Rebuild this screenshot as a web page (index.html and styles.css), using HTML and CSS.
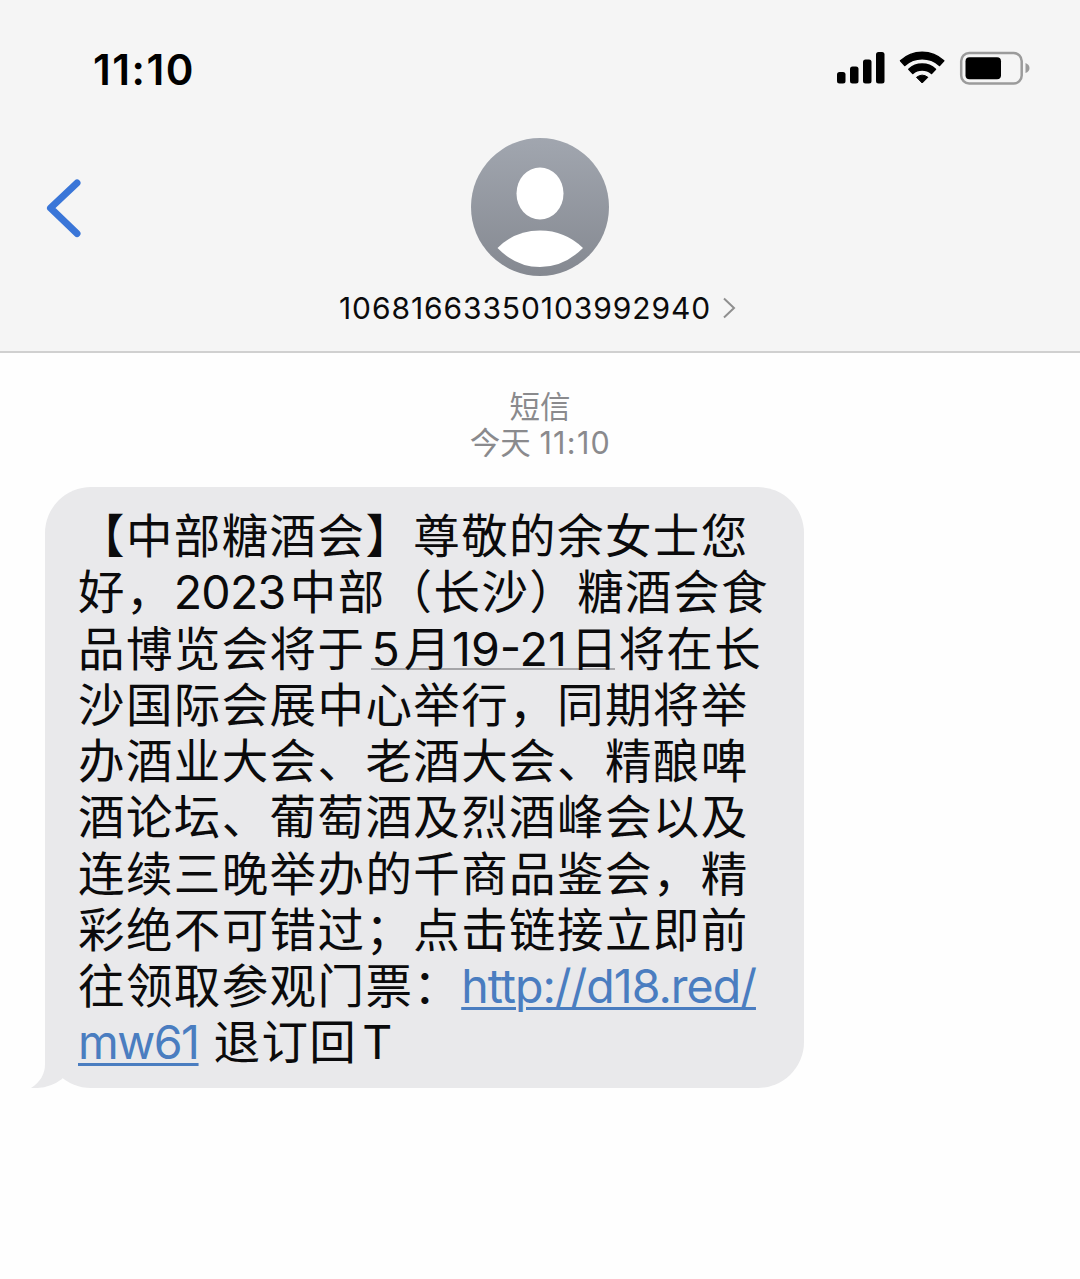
FILE: index.html
```html
<!DOCTYPE html>
<html lang="zh-CN">
<head>
<meta charset="UTF-8">
<meta name="viewport" content="width=device-width, initial-scale=1.0">
<title>短信</title>
<link rel="stylesheet" href="styles.css">
</head>
<body>
<div class="header">
  <div class="status-bar">
    <span class="time">11:10</span>
    <svg class="status-icons" width="196" height="40" viewBox="0 0 196 40">
      <rect x="1" y="23" width="8.5" height="11.500" rx="2.5"/>
      <rect x="14" y="17.500" width="8.5" height="17" rx="2.5"/>
      <rect x="27" y="10.500" width="8.5" height="24" rx="2.5"/>
      <rect x="40" y="3" width="8.500" height="31.500" rx="2.500"/>
      <path d="M64.500 11.800A31.500 31.500 0 0 1 107.800 11.800L103.500 16.500A26 26 0 0 0 68.800 16.500Z" stroke="#000" stroke-width="1.500" stroke-linejoin="round"/>
      <path d="M72.800 20.300A19.500 19.500 0 0 1 99.500 20.300L95.500 24.500A14.300 14.300 0 0 0 76.800 24.500Z" stroke="#000" stroke-width="1.500" stroke-linejoin="round"/>
      <path d="M80.500 28.300Q86.200 24 91.900 28.300L86.200 34Z" stroke="#000" stroke-width="1" stroke-linejoin="round"/>
      <rect x="125.200" y="4" width="60.500" height="30.500" rx="8" fill="none" stroke="#9b9b9b" stroke-width="2.500"/>
      <rect x="129.500" y="8.300" width="35.500" height="22" rx="4"/>
      <path d="M189.500 14Q193.500 15.500 193.500 19T189.500 24Z" fill="#9b9b9b"/>
    </svg>
  </div>
  <div class="nav">
    <svg class="back" width="44" height="66" viewBox="0 0 44 66">
      <path d="M35 9L8.500 34L35 59.500" fill="none" stroke="#3a76d8" stroke-width="7" stroke-linecap="round" stroke-linejoin="round"/>
    </svg>
    <svg class="avatar" width="138" height="138" viewBox="0 0 138 138">
      <defs>
        <linearGradient id="gray" x1="0" y1="0" x2="0" y2="1">
          <stop offset="0" stop-color="#a1a6af"/>
          <stop offset="1" stop-color="#858991"/>
        </linearGradient>
      </defs>
      <circle cx="69" cy="69" r="69" fill="url(#gray)"/>
      <ellipse cx="69" cy="55.500" rx="23.500" ry="26" fill="#fff"/>
      <path d="M26.500 110Q44 92.500 69 92.500T112 110Q93 129 69 129T26.500 110Z" fill="#fff"/>
    </svg>
  </div>
  <div class="contact">
    <span class="number">10681663350103992940</span>
    <svg width="14" height="22" viewBox="0 0 14 22">
      <path d="M2 1.500L12 11L2 20.500" fill="none" stroke="#8f8f8f" stroke-width="2"/>
    </svg>
  </div>
</div>
<div class="date">
  <div>短信</div>
  <div>今天 <span class="date-time">11:10</span></div>
</div>
<div class="bubble">
  <p>【中部糖酒会】尊敬的余女士您</p>
  <p>好，<span class="year">2023</span>中部（长沙）糖酒会食</p>
  <p>品博览会将于<span class="event-date">5<span class="month">月</span><span class="days">19-21</span><span class="day">日</span></span>将在长</p>
  <p>沙国际会展中心举行，同期将举</p>
  <p>办酒业大会、老酒大会、精酿啤</p>
  <p>酒论坛、葡萄酒及烈酒峰会以及</p>
  <p>连续三晚举办的千商品鉴会，精</p>
  <p>彩绝不可错过；点击链接立即前</p>
  <p>往领取参观门票：<a class="link" href="#">http://d18.red/</a></p>
  <p><a class="link link-end" href="#">mw61</a>退订回<span class="reply">T</span></p>
  <svg class="tail" width="46" height="60" viewBox="0 0 46 60">
    <path d="M14 10V36Q14 51 0 60Q18 61 31 51L42 34L36 10Z" fill="#e9e9eb"/>
  </svg>
</div>
</body>
</html>
```
FILE: styles.css
```css
* { box-sizing: border-box; }
body { margin: 0; min-height: 1279px; background-color: #fefefe; color: #0b0b0c; font-family: Inter, "Noto Sans CJK SC", sans-serif; text-spacing-trim: space-all; text-autospace: no-autospace; }
.header { height: 353px; background-color: #f5f5f5; border-bottom: 2px solid #d0d0d0; }
.status-bar { display: flex; justify-content: space-between; align-items: center; height: 138px; padding: 0 48px 0 93px; }
.time { font-size: 42px; font-weight: 600; letter-spacing: 1.500px; color: #000; }
.nav { display: flex; align-items: center; height: 138px; padding-left: 42px; }
.avatar { margin-left: 385px; }
.contact { display: flex; justify-content: center; align-items: center; gap: 11px; height: 63px; padding-right: 5px; }
.number { font-size: 30px; letter-spacing: 0.900px; }
.date { padding-top: 36px; text-align: center; font-size: 30.500px; line-height: 36px; color: #8a8a8d; }
.date-time { letter-spacing: 1.300px; margin-right: -1px; }
.bubble { position: relative; width: 759px; height: 601px; margin: 26px 0 0 45px; padding: 21px 0 0 33px; background-color: #e9e9eb; border-radius: 46px; }
.bubble p { margin: 0; font-size: 46.500px; letter-spacing: 1.400px; line-height: 56.250px; height: 56.250px; white-space: nowrap; }
.year { display: inline-block; width: 116px; letter-spacing: -0.800px; }
.event-date { display: inline-block; width: 247px; height: 49px; line-height: 56px; margin-left: 6px; background: linear-gradient(#a5a5a8, #a5a5a8) left bottom / 244px 2px no-repeat; vertical-align: top; }
.month { margin-left: 3px; }
.days { letter-spacing: 0; margin-left: 0; }
.day { margin-left: 4px; }
.link { color: #4a7dc0; letter-spacing: -1px; text-decoration-thickness: 3px; text-underline-offset: 4px; }
.link-end { letter-spacing: -1.500px; margin-right: 15px; }
.reply { margin-left: 5px; }
.tail { position: absolute; left: -14px; bottom: 0; }
```
